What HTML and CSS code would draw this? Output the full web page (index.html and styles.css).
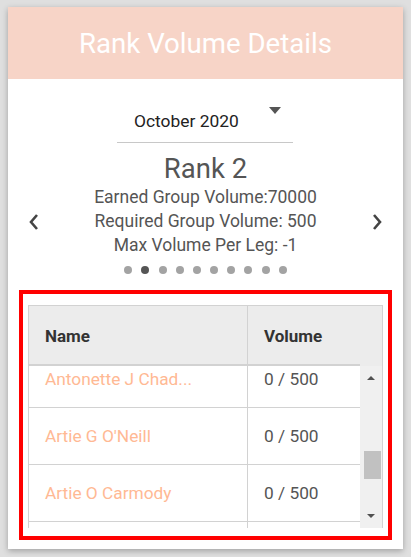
FILE: index.html
```html
<!DOCTYPE html>
<html>
<head>
<meta charset="utf-8">
<link rel="stylesheet" href="styles.css">
</head>
<body>
<div class="card">
  <div class="card-header">Rank Volume Details</div>
  <div class="select-row">
    <div class="select">
      <span class="select-value">October 2020</span>
      <span class="select-caret"></span>
    </div>
  </div>
  <div class="slider">
    <svg class="chev" width="14" height="18" viewBox="0 0 14 18"><path d="M10 2 L4 9 L10 16" fill="none" stroke="#444" stroke-width="2.6"/></svg>
    <div class="slide">
      <div class="rank">Rank 2</div>
      <div class="line">Earned Group Volume:70000</div>
      <div class="line">Required Group Volume: 500</div>
      <div class="line">Max Volume Per Leg: -1</div>
      <div class="dots">
        <span class="dot"></span><span class="dot active"></span><span class="dot"></span><span class="dot"></span><span class="dot"></span><span class="dot"></span><span class="dot"></span><span class="dot"></span><span class="dot"></span><span class="dot"></span>
      </div>
    </div>
    <svg class="chev" width="14" height="18" viewBox="0 0 14 18"><path d="M4 2 L10 9 L4 16" fill="none" stroke="#444" stroke-width="2.6"/></svg>
  </div>
  <div class="highlight">
    <div class="table">
      <div class="thead">
        <div class="th th-name">Name</div>
        <div class="th th-vol">Volume</div>
      </div>
      <div class="tbody">
        <div class="rows">
          <div class="rows-inner">
            <div class="tr"><div class="td td-name">Antonette J Chad...</div><div class="td td-vol">0 / 500</div></div>
            <div class="tr"><div class="td td-name">Artie G O'Neill</div><div class="td td-vol">0 / 500</div></div>
            <div class="tr"><div class="td td-name">Artie O Carmody</div><div class="td td-vol">0 / 500</div></div>
            <div class="tr"><div class="td td-name"></div><div class="td td-vol"></div></div>
          </div>
        </div>
        <div class="scrollbar">
          <span class="sb-up"></span>
          <span class="sb-track"><span class="sb-thumb"></span></span>
          <span class="sb-down"></span>
        </div>
      </div>
    </div>
  </div>
</div>
</body>
</html>
```

FILE: styles.css
```css
* { box-sizing: border-box; }
html, body { margin: 0; padding: 0; }
body {
  background: #dfdfdf;
  font-family: Roboto, "Liberation Sans", sans-serif;
  width: 411px;
  height: 557px;
  overflow: hidden;
  padding: 7px 8px 0 8px;
}
.card {
  width: 395px;
  height: 542px;
  background: #fff;
  box-shadow: 0 2px 6px rgba(0,0,0,0.28);
  display: flex;
  flex-direction: column;
}
.card-header {
  height: 72px;
  background: #f7d4c7;
  color: #fff;
  font-size: 27.6px;
  display: flex;
  align-items: center;
  justify-content: center;
  padding-top: 1px;
}
.select-row {
  display: flex;
  justify-content: center;
  padding-top: 15px;
  padding-right: 1px;
}
.select {
  width: 176px;
  height: 49px;
  border-bottom: 1px solid #c8c8c8;
  display: flex;
  align-items: flex-end;
  padding: 0 0 9px 17px;
}
.select-value {
  font-size: 17.4px;
  line-height: 24px;
  color: #222;
}
.select-caret {
  align-self: flex-start;
  margin-top: 13px;
  margin-left: auto;
  margin-right: 12px;
  width: 0;
  height: 0;
  border-left: 6.5px solid transparent;
  border-right: 6.5px solid transparent;
  border-top: 7px solid #555;
}
.slider {
  display: flex;
  justify-content: space-between;
  align-items: flex-start;
  padding: 9px 19px 0 19px;
}
.chev { margin-top: 61px; }
.slide {
  display: flex;
  flex-direction: column;
  align-items: center;
  color: #555;
}
.rank {
  font-size: 27.5px;
  line-height: 33px;
}
.line {
  font-size: 17.5px;
  line-height: 24px;
}
.dots {
  display: flex;
  gap: 9.2px;
  margin-top: 9px;
}
.dot {
  width: 8px;
  height: 8px;
  border-radius: 50%;
  background: #a3a3a3;
}
.dot.active { background: #555; }
.highlight {
  margin: 16px 11px 0 11px;
  height: 250px;
  border: 4px solid #ff0000;
  padding: 11px 5px 0 5px;
}
.table {
  border: 1px solid #d2d2d2;
  border-bottom: none;
  height: 223px;
  display: flex;
  flex-direction: column;
}
.thead {
  height: 58px;
  background: #ececec;
  display: flex;
  flex: none;
}
.th {
  font-weight: bold;
  font-size: 17px;
  color: #333;
  display: flex;
  align-items: center;
  padding-left: 16px;
  padding-top: 1px;
}
.th-name { width: 219px; border-right: 1px solid #d2d2d2; }
.th-vol { flex: 1; }
.tbody {
  flex: 1;
  display: flex;
  background: #ececec;
  min-height: 0;
}
.rows {
  width: 332px;
  background: #fff;
  border-top: 2px solid #d2d2d2;
  overflow: hidden;
}
.rows-inner { margin-top: -15px; }
.tr {
  height: 57px;
  display: flex;
  border-bottom: 1px solid #d2d2d2;
}
.td {
  font-size: 17.3px;
  display: flex;
  align-items: center;
  padding-left: 16px;
}
.td-name {
  width: 219px;
  border-right: 1px solid #d2d2d2;
  color: #ffb994;
}
.td-vol { flex: 1; color: #555; }
.scrollbar {
  width: 22px;
  margin-top: 2px;
  background: #f0f0f0;
  display: flex;
  flex-direction: column;
  align-items: center;
}
.sb-up {
  margin-top: 10px;
  width: 0; height: 0;
  border-left: 4.5px solid transparent;
  border-right: 4.5px solid transparent;
  border-bottom: 4px solid #505050;
}
.sb-track {
  flex: 1;
  width: 100%;
  display: flex;
  flex-direction: column;
  align-items: center;
  padding-top: 71px;
}
.sb-thumb {
  width: 17px;
  height: 28px;
  background: #c1c1c1;
  margin-left: 2px;
}
.sb-down {
  margin-bottom: 10px;
  width: 0; height: 0;
  border-left: 4.5px solid transparent;
  border-right: 4.5px solid transparent;
  border-top: 4px solid #505050;
}
```
